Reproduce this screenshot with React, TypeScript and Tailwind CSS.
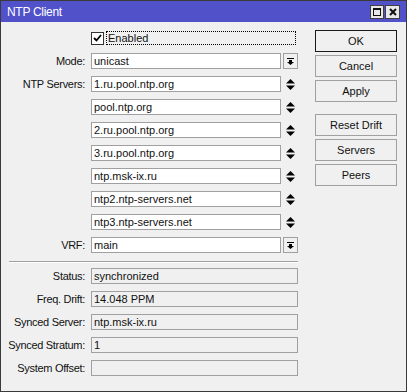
import React from 'react';

const servers = [
  '1.ru.pool.ntp.org',
  'pool.ntp.org',
  '2.ru.pool.ntp.org',
  '3.ru.pool.ntp.org',
  'ntp.msk-ix.ru',
  'ntp2.ntp-servers.net',
  'ntp3.ntp-servers.net',
];

const status = [
  { label: 'Status:', value: 'synchronized' },
  { label: 'Freq. Drift:', value: '14.048 PPM' },
  { label: 'Synced Server:', value: 'ntp.msk-ix.ru' },
  { label: 'Synced Stratum:', value: '1' },
  { label: 'System Offset:', value: '' },
];

function DropIcon() {
  return (
    <svg width="7" height="7" viewBox="0 0 7 7">
      <rect x="0" y="0" width="7" height="1" fill="#000" />
      <path d="M2 2h3v2h2L3.5 7 0 4h2z" fill="#000" />
    </svg>
  );
}

function UpDown() {
  return (
    <svg width="9" height="11" viewBox="0 0 9 11">
      <path d="M4.5 0L9 4.5H0z" fill="#000" />
      <path d="M0 6.5h9L4.5 11z" fill="#000" />
    </svg>
  );
}

function Row({ label, children }: { label?: string; children: React.ReactNode }) {
  return (
    <div className="flex h-[16px] items-center">
      <div className="w-[82px] shrink-0 whitespace-nowrap pr-[1px] text-right tracking-[-0.3px]">{label}</div>
      <div className="ml-[5px] flex items-center">{children}</div>
    </div>
  );
}

function Field({ value }: { value: string }) {
  return (
    <div className="flex h-[16px] w-[190px] items-center border border-[#a0a0a0] bg-white px-[2px] leading-none">
      {value}
    </div>
  );
}

function Btn({ label, primary }: { label: string; primary?: boolean }) {
  return (
    <div
      className={`flex h-[22px] w-[82px] items-center justify-center border bg-[#f0f0f0] ${
        primary ? 'border-[#1a1a1a]' : 'border-[#a0a0a0]'
      }`}
    >
      {label}
    </div>
  );
}

export default function App() {
  return (
    <div
      className="flex h-[392px] w-[407px] flex-col border border-[#3a3a3a] bg-[#f0f0f0] text-[11px] text-[#111]"
      style={{ fontFamily: '"Liberation Sans", Arial, sans-serif' }}
    >
      {/* Title bar */}
      <div className="flex h-[21px] shrink-0 items-center bg-[#5151c9] pl-[6px] pr-[6px]">
        <span className="text-[12px] tracking-[-0.3px] text-white">NTP Client</span>
        <div className="ml-auto flex gap-[1px] pt-[1px]">
          <div className="flex h-[14px] w-[14px] items-center justify-center border border-[#404040] bg-[#e8e8e8]">
            <div className="h-[8px] w-[8px] border border-t-2 border-[#111]" />
          </div>
          <div className="flex h-[14px] w-[15px] items-center justify-center border border-[#404040] bg-[#e8e8e8]">
            <svg width="8" height="8" viewBox="0 0 8 8">
              <path d="M1 1l6 6M7 1L1 7" stroke="#111" strokeWidth="2" />
            </svg>
          </div>
        </div>
      </div>

      {/* Body */}
      <div className="flex flex-1 pl-[3px] pt-[8px]">
        <div className="flex w-[294px] flex-col gap-[7px]">
          <Row>
            <div className="flex items-center">
              <div className="flex h-[13px] w-[13px] items-center justify-center border border-[#333] bg-white">
                <svg width="9" height="8" viewBox="0 0 9 8">
                  <path d="M1 4l2.5 2.5L8 1" stroke="#000" strokeWidth="1.8" fill="none" />
                </svg>
              </div>
              <div className="ml-[2px] flex h-[14px] w-[190px] items-center border border-dotted border-black pl-[1px]">
                Enabled
              </div>
            </div>
          </Row>
          <Row label="Mode:">
            <Field value="unicast" />
            <div className="ml-[2px] flex h-[16px] w-[15px] items-center justify-center border border-[#a0a0a0] bg-[#f0f0f0]">
              <DropIcon />
            </div>
          </Row>
          {servers.map((s, i) => (
            <Row key={s} label={i === 0 ? 'NTP Servers:' : undefined}>
              <Field value={s} />
              <div className="ml-[2px] flex w-[15px] justify-center">
                <UpDown />
              </div>
            </Row>
          ))}
          <Row label="VRF:">
            <Field value="main" />
            <div className="ml-[2px] flex h-[16px] w-[15px] items-center justify-center border border-[#a0a0a0] bg-[#f0f0f0]">
              <DropIcon />
            </div>
          </Row>

          <div className="ml-[5px] mt-[1px] h-[2px] border-t border-b border-t-[#a0a0a0] border-b-white" />

          <div className="mt-[-2px] flex flex-col gap-[7px]">
            {status.map((r) => (
              <Row key={r.label} label={r.label}>
                <div className="flex h-[16px] w-[207px] items-center border border-[#a0a0a0] bg-[#f0f0f0] px-[2px] leading-none">
                  {r.value}
                </div>
              </Row>
            ))}
          </div>
        </div>

        <div className="ml-[17px] flex flex-col">
          <div className="flex flex-col gap-[3px]">
            <Btn label="OK" primary />
            <Btn label="Cancel" />
            <Btn label="Apply" />
          </div>
          <div className="mt-[12px] flex flex-col gap-[3px]">
            <Btn label="Reset Drift" />
            <Btn label="Servers" />
            <Btn label="Peers" />
          </div>
        </div>
      </div>
    </div>
  );
}
